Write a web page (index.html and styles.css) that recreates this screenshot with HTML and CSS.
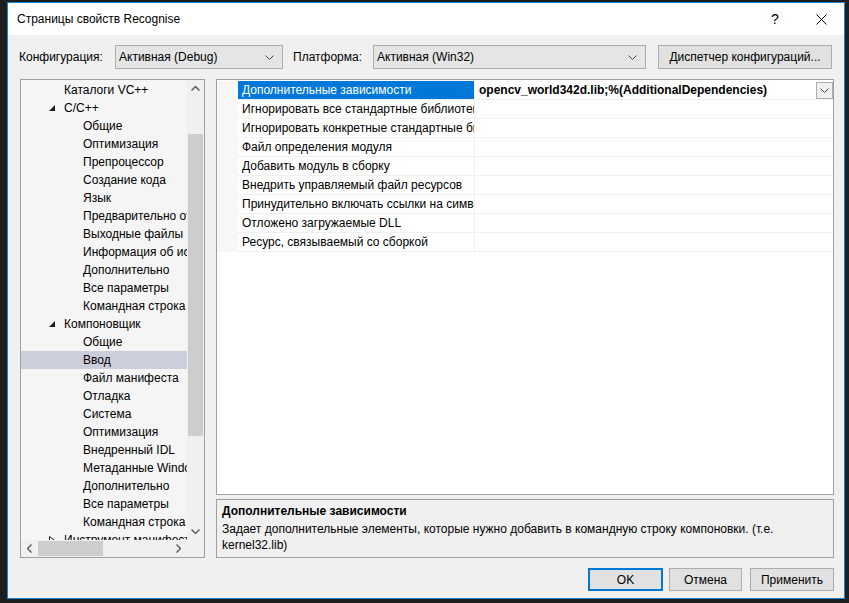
FILE: index.html
```html
<!DOCTYPE html>
<html lang="ru">
  <head>
    <meta charset="UTF-8" />
    <title>Страницы свойств Recognise</title>
    <link rel="stylesheet" href="styles.css">
  </head>
  <body>
    <div class="dialog">
      <div class="titlebar">
        <span class="title">Страницы свойств Recognise</span>
        <span class="capBtn help">?</span>
        <span class="capBtn">
          <svg width="11" height="11" viewBox="0 0 11 11"><path d="M0.5 0.5L10.5 10.5M10.5 0.5L0.5 10.5" stroke="#000" stroke-width="1"/></svg>
        </span>
      </div>

      <div class="toolbar">
        <span class="lbl lblConfig">Конфигурация:</span>
        <div class="combo comboConfig">
          <span>Активная (Debug)</span>
          <svg class="chev" width="9" height="5" viewBox="0 0 9 5"><path d="M0.5 0.5L4.5 4.5L8.5 0.5" fill="none" stroke="#444"/></svg>
        </div>
        <span class="lbl lblPlatform">Платформа:</span>
        <div class="combo comboPlatform">
          <span>Активная (Win32)</span>
          <svg class="chev" width="9" height="5" viewBox="0 0 9 5"><path d="M0.5 0.5L4.5 4.5L8.5 0.5" fill="none" stroke="#444"/></svg>
        </div>
        <button class="btn btnManager">Диспетчер конфигураций...</button>
      </div>

      <div class="content">
        <div class="treePanel">
          <div class="treeView">
            <div class="treeItems">
              <div class="treeRow lvl1">Каталоги VC++</div>
              <div class="treeRow lvl1 parent"><svg class="exp" width="6" height="6" viewBox="0 0 6 6"><path d="M6 0V6H0Z" fill="#1e1e1e"/></svg>C/C++</div>
              <div class="treeRow lvl2">Общие</div>
              <div class="treeRow lvl2">Оптимизация</div>
              <div class="treeRow lvl2">Препроцессор</div>
              <div class="treeRow lvl2">Создание кода</div>
              <div class="treeRow lvl2">Язык</div>
              <div class="treeRow lvl2">Предварительно откомпилированные заголовки</div>
              <div class="treeRow lvl2">Выходные файлы</div>
              <div class="treeRow lvl2">Информация об исходных файлах</div>
              <div class="treeRow lvl2">Дополнительно</div>
              <div class="treeRow lvl2">Все параметры</div>
              <div class="treeRow lvl2">Командная строка</div>
              <div class="treeRow lvl1 parent"><svg class="exp" width="6" height="6" viewBox="0 0 6 6"><path d="M6 0V6H0Z" fill="#1e1e1e"/></svg>Компоновщик</div>
              <div class="treeRow lvl2">Общие</div>
              <div class="treeRow lvl2 selected">Ввод</div>
              <div class="treeRow lvl2">Файл манифеста</div>
              <div class="treeRow lvl2">Отладка</div>
              <div class="treeRow lvl2">Система</div>
              <div class="treeRow lvl2">Оптимизация</div>
              <div class="treeRow lvl2">Внедренный IDL</div>
              <div class="treeRow lvl2">Метаданные Windows</div>
              <div class="treeRow lvl2">Дополнительно</div>
              <div class="treeRow lvl2">Все параметры</div>
              <div class="treeRow lvl2">Командная строка</div>
              <div class="treeRow lvl1 parent"><svg class="exp" width="6" height="8" viewBox="0 0 6 8"><path d="M0.5 0.5L5 4L0.5 7.5Z" fill="none" stroke="#1e1e1e"/></svg>Инструмент манифеста</div>
            </div>
            <div class="vscroll">
              <div class="sbBtn">
                <svg width="9" height="5" viewBox="0 0 9 5"><path d="M0.5 4.5L4.5 0.5L8.5 4.5" fill="none" stroke="#606060" stroke-width="1.5"/></svg>
              </div>
              <div class="vTrack"><div class="vThumb"></div></div>
              <div class="sbBtn">
                <svg width="9" height="5" viewBox="0 0 9 5"><path d="M0.5 0.5L4.5 4.5L8.5 0.5" fill="none" stroke="#606060" stroke-width="1.5"/></svg>
              </div>
            </div>
          </div>
          <div class="hscrollRow">
            <div class="sbBtn">
              <svg width="5" height="9" viewBox="0 0 5 9"><path d="M4.5 0.5L0.5 4.5L4.5 8.5" fill="none" stroke="#606060" stroke-width="1.5"/></svg>
            </div>
            <div class="hTrack"><div class="hThumb"></div></div>
            <div class="sbBtn">
              <svg width="5" height="9" viewBox="0 0 5 9"><path d="M0.5 0.5L4.5 4.5L0.5 8.5" fill="none" stroke="#606060" stroke-width="1.5"/></svg>
            </div>
            <div class="corner"></div>
          </div>
        </div>

        <div class="rightCol">
          <div class="grid">
            <div class="gridRow active">
              <div class="strip"></div>
              <div class="name">Дополнительные зависимости</div>
              <div class="value bold">
                <span>opencv_world342d.lib;%(AdditionalDependencies)</span>
                <span class="dropBtn">
                  <svg width="9" height="5" viewBox="0 0 9 5"><path d="M0.5 0.5L4.5 4.5L8.5 0.5" fill="none" stroke="#444"/></svg>
                </span>
              </div>
            </div>
            <div class="gridRow"><div class="strip"></div><div class="name">Игнорировать все стандартные библиотеки</div><div class="value"></div></div>
            <div class="gridRow"><div class="strip"></div><div class="name">Игнорировать конкретные стандартные библиотеки</div><div class="value"></div></div>
            <div class="gridRow"><div class="strip"></div><div class="name">Файл определения модуля</div><div class="value"></div></div>
            <div class="gridRow"><div class="strip"></div><div class="name">Добавить модуль в сборку</div><div class="value"></div></div>
            <div class="gridRow"><div class="strip"></div><div class="name">Внедрить управляемый файл ресурсов</div><div class="value"></div></div>
            <div class="gridRow"><div class="strip"></div><div class="name">Принудительно включать ссылки на символы</div><div class="value"></div></div>
            <div class="gridRow"><div class="strip"></div><div class="name">Отложено загружаемые DLL</div><div class="value"></div></div>
            <div class="gridRow"><div class="strip"></div><div class="name">Ресурс, связываемый со сборкой</div><div class="value"></div></div>
          </div>
          <div class="desc">
            <div class="descTitle">Дополнительные зависимости</div>
            <div class="descText">Задает дополнительные элементы, которые нужно добавить в командную строку компоновки. (т.е.<br>kernel32.lib)</div>
          </div>
        </div>
      </div>

      <div class="footer">
        <button class="btn btnOk">OK</button>
        <button class="btn btnCancel">Отмена</button>
        <button class="btn btnApply">Применить</button>
      </div>
    </div>
  </body>
</html>
```

FILE: styles.css
```css
* {
  box-sizing: border-box;
}
html,
body {
  margin: 0;
}
body {
  width: 849px;
  height: 603px;
  overflow: hidden;
  background-color: #1e1e1e;
  font-family: "Liberation Sans", Arial, sans-serif;
  font-size: 12px;
  color: #000;
}

.dialog {
  margin: 2px 0 0 7px;
  width: 838px;
  height: 597px;
  border: 1px solid #1883d7;
  background-color: #f0f0f0;
  display: flex;
  flex-direction: column;
}

/* title bar */
.titlebar {
  height: 32px;
  background-color: #fff;
  display: flex;
  align-items: center;
  padding-left: 9px;
}
.title {
  flex: 1;
}
.capBtn {
  width: 46px;
  height: 32px;
  display: flex;
  align-items: center;
  justify-content: center;
}
.help {
  font-size: 14px;
}

/* top toolbar */
.toolbar {
  display: flex;
  align-items: center;
  padding: 10px 0 0 11px;
  height: 34px;
}
.lbl {
  flex: none;
}
.lblConfig {
  width: 96px;
}
.lblPlatform {
  width: 80px;
  margin-left: 10px;
}
.combo {
  height: 24px;
  background-color: #e5e5e5;
  border: 1px solid #adadad;
  display: flex;
  align-items: center;
  justify-content: space-between;
  padding: 0 8px 0 3px;
}
.comboConfig {
  width: 168px;
}
.comboPlatform {
  width: 273px;
}
.btn {
  height: 23px;
  background-color: #e1e1e1;
  border: 1px solid #adadad;
  font-family: inherit;
  font-size: 12px;
  color: #000;
  padding: 0;
}
.btnManager {
  width: 174px;
  height: 24px;
  margin-left: 12px;
}

/* main area */
.content {
  display: flex;
  margin-top: 10px;
  padding-left: 12px;
}

.treePanel {
  width: 185px;
  height: 479px;
  border: 1px solid #a0a0a0;
  background-color: #f5f5f5;
  display: flex;
  flex-direction: column;
}
.treeView {
  display: flex;
  height: 460px;
}
.treeItems {
  width: 166px;
  overflow: hidden;
  padding-top: 1px;
}
.treeRow {
  height: 18px;
  line-height: 18px;
  white-space: nowrap;
  display: flex;
  align-items: center;
}
.lvl1 {
  padding-left: 43px;
}
.lvl1.parent {
  padding-left: 28px;
}
.lvl2 {
  padding-left: 62px;
}
.exp {
  margin-right: 9px;
  flex: none;
}
.selected {
  background-color: #cccedb;
}

.vscroll {
  width: 17px;
  display: flex;
  flex-direction: column;
  background-color: #f0f0f0;
}
.sbBtn {
  width: 17px;
  height: 17px;
  flex: none;
  display: flex;
  align-items: center;
  justify-content: center;
}
.vTrack {
  flex: 1;
  padding-top: 37px;
}
.vThumb {
  margin: 0 1px;
  height: 302px;
  background-color: #cdcdcd;
}
.hscrollRow {
  height: 17px;
  display: flex;
  background-color: #f0f0f0;
}
.hTrack {
  width: 132px;
}
.hThumb {
  width: 65px;
  height: 15px;
  margin-top: 1px;
  background-color: #cdcdcd;
}
.corner {
  width: 17px;
}

/* property grid */
.rightCol {
  margin-left: 11px;
  width: 618px;
  display: flex;
  flex-direction: column;
  gap: 4px;
}
.grid {
  height: 416px;
  border: 1px solid #a0a0a0;
  background-color: #fff;
  padding-top: 1px;
}
.gridRow {
  display: flex;
  height: 19px;
}
.strip {
  width: 21px;
  background-color: #f7f7f7;
}
.name {
  width: 236px;
  padding-left: 4px;
  line-height: 18px;
  white-space: nowrap;
  overflow: hidden;
  border-bottom: 1px solid #f0f0f0;
}
.value {
  flex: 1;
  padding-left: 4px;
  line-height: 18px;
  white-space: nowrap;
  border-left: 1px solid #f0f0f0;
  border-bottom: 1px solid #f0f0f0;
  display: flex;
  justify-content: space-between;
  align-items: center;
}
.bold {
  font-weight: bold;
}
.active .name {
  background-color: #0078d7;
  color: #fff;
}
.dropBtn {
  width: 17px;
  height: 17px;
  border: 1px solid #acacac;
  background-color: #f0f0f0;
  display: flex;
  align-items: center;
  justify-content: center;
}

.desc {
  height: 59px;
  border: 1px solid #a0a0a0;
  padding: 3px 5px;
  line-height: 16px;
}
.descTitle {
  font-weight: bold;
  margin-bottom: 2px;
}

/* bottom buttons */
.footer {
  display: flex;
  justify-content: flex-end;
  margin-top: 10px;
  padding-right: 10px;
}
.btnOk {
  width: 75px;
  border: 2px solid #0078d7;
}
.btnCancel {
  width: 73px;
  margin-left: 6px;
}
.btnApply {
  width: 84px;
  margin-left: 8px;
}
```
